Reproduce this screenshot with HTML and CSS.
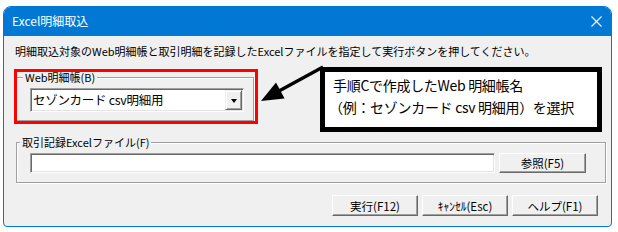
FILE: index.html
```html
<!DOCTYPE html>
<html lang="ja">
<head>
<meta charset="utf-8">
<title>Excel明細取込</title>
<link rel="stylesheet" href="styles.css">
</head>
<body>
<div class="screen">
  <div class="window">
    <div class="titlebar">
      <span class="title">Excel明細取込</span>
      <svg class="close" width="11" height="11" viewBox="0 0 11 11"><path d="M0.5 0.5 L10.5 10.5 M10.5 0.5 L0.5 10.5" stroke="#fff" stroke-width="1.1" fill="none"/></svg>
    </div>
    <div class="content">
      <p class="instr">明細取込対象のWeb明細帳と取引明細を記録したExcelファイルを指定して実行ボタンを押してください。</p>
      <fieldset class="group g1">
        <legend class="legend l1">Web明細帳(B)</legend>
        <div class="combo">
          <span class="combo-text">セゾンカード csv明細用</span>
          <span class="combo-btn"><span class="tri"></span></span>
        </div>
      </fieldset>
      <fieldset class="group g2">
        <legend class="legend l2">取引記録Excelファイル(F)</legend>
        <div class="file-row">
          <div class="input"></div>
          <button class="btn browse">参照(F5)</button>
        </div>
      </fieldset>
      <div class="actions">
        <button class="btn act">実行(F12)</button>
        <button class="btn act">ｷｬﾝｾﾙ(Esc)</button>
        <button class="btn act">ヘルプ(F1)</button>
      </div>
    </div>
  </div>
  <div class="highlight"></div>
  <svg class="arrow" width="618" height="232" viewBox="0 0 618 232">
    <line x1="323" y1="67" x2="279" y2="91" stroke="#000" stroke-width="3.2"/>
    <polygon points="261,101 276,82.6 284.6,98.4" fill="#000"/>
  </svg>
  <div class="callout">
    <div class="callout-line">手順Cで作成したWeb 明細帳名</div>
    <div class="callout-line indent">（例：セゾンカード csv 明細用）を選択</div>
  </div>
</div>
</body>
</html>
```
FILE: styles.css
```css
* { box-sizing: border-box; }
html, body { margin: 0; padding: 0; background: #fff; }
body { font-family: "Noto Sans CJK JP", "Noto Sans", sans-serif; color: #000; }
.screen { position: relative; width: 618px; height: 232px; overflow: hidden; }

.window {
  margin: 6px 0 0 3px;
  width: 609px;
  height: 221px;
  border: 1px solid #0078d4;
  border-radius: 8px 8px 4px 4px;
  background: #f0f0f0;
  overflow: hidden;
}
.titlebar {
  height: 30px;
  background: #0078d4;
  display: flex;
  align-items: center;
  justify-content: space-between;
  padding: 0 9px 0 8px;
  margin-top: -1px;
}
.title { color: #fff; font-size: 12px; line-height: 14px; }
.close { display: block; margin-top: 1px; }

.content { padding: 0 0 0 12px; }
.instr {
  margin: 8px 0 0 -1px;
  font-size: 11px;
  line-height: 14px;
  white-space: nowrap;
}

.group {
  margin: 0;
  padding: 0 0 8px 0;
  border: 1px solid #a0a0a0;
  box-shadow: 1px 1px 0 #fff, inset 1px 1px 0 #fff;
  min-inline-size: 0;
}
.legend {
  font-size: 11px;
  line-height: 14px;
  padding: 0 2px;
  background: #f0f0f0;
}
.l1 { margin-left: 6px; }
.l2 { margin-left: 3px; }
.g1 { width: 238px; margin-top: 12px; }
.g2 { width: 590px; margin-top: 14px; padding-bottom: 9px; }

.combo {
  margin: 4px 0 0 13px;
  width: 214px;
  height: 24px;
  background: #fff;
  border: 1px solid;
  border-color: #a0a0a0 #fff #fff #a0a0a0;
  box-shadow: inset 1px 1px 0 #696969, inset -1px -1px 0 #e3e3e3;
  padding: 1px;
  display: flex;
  align-items: center;
  justify-content: space-between;
}
.combo-text { font-size: 12.5px; line-height: 20px; padding-left: 1px; white-space: nowrap; letter-spacing: -0.3px; }
.combo-btn {
  width: 17px;
  height: 20px;
  background: #f0f0f0;
  border: 1px solid;
  border-color: #f0f0f0 #696969 #696969 #f0f0f0;
  box-shadow: inset 1px 1px 0 #fff, inset -1px -1px 0 #a0a0a0;
  display: flex;
  align-items: center;
  justify-content: center;
}
.tri {
  width: 0; height: 0;
  border-left: 3.5px solid transparent;
  border-right: 3.5px solid transparent;
  border-top: 4px solid #000;
  margin-top: 1px;
}

.file-row { display: flex; gap: 4px; margin: 4px 0 0 13px; }
.input {
  width: 465px;
  height: 20px;
  background: #fff;
  border: 1px solid;
  border-color: #a0a0a0 #fff #fff #a0a0a0;
  box-shadow: inset 1px 1px 0 #696969, inset -1px -1px 0 #e3e3e3;
}

.btn {
  font-family: "Noto Sans CJK JP", "Noto Sans", sans-serif;
  font-size: 11.5px;
  line-height: 14px;
  color: #000;
  background: #f0f0f0;
  border: 1px solid;
  border-color: #fff #696969 #696969 #fff;
  box-shadow: inset -1px -1px 0 #a0a0a0;
  padding: 0;
  margin: 0;
  white-space: nowrap;
}
.browse { width: 87px; height: 20px; }

.actions {
  display: flex;
  justify-content: flex-end;
  gap: 4px;
  margin: 12px 13px 0 0;
}
.act { width: 86px; height: 21px; }

.highlight {
  position: absolute;
  left: 14px; top: 69px;
  width: 244px; height: 55px;
  border: 3px solid #ff0000;
}
.arrow { position: absolute; left: 0; top: 0; pointer-events: none; }
.callout {
  position: absolute;
  left: 320px; top: 67px;
  width: 282px; height: 65px;
  border: 5px solid #000;
  background: #fff;
  overflow: hidden;
  padding: 2px 0 0 8px;
}
.callout-line { font-size: 14px; line-height: 22px; white-space: nowrap; letter-spacing: -0.3px; }
.indent { margin-left: -4px; }
```
